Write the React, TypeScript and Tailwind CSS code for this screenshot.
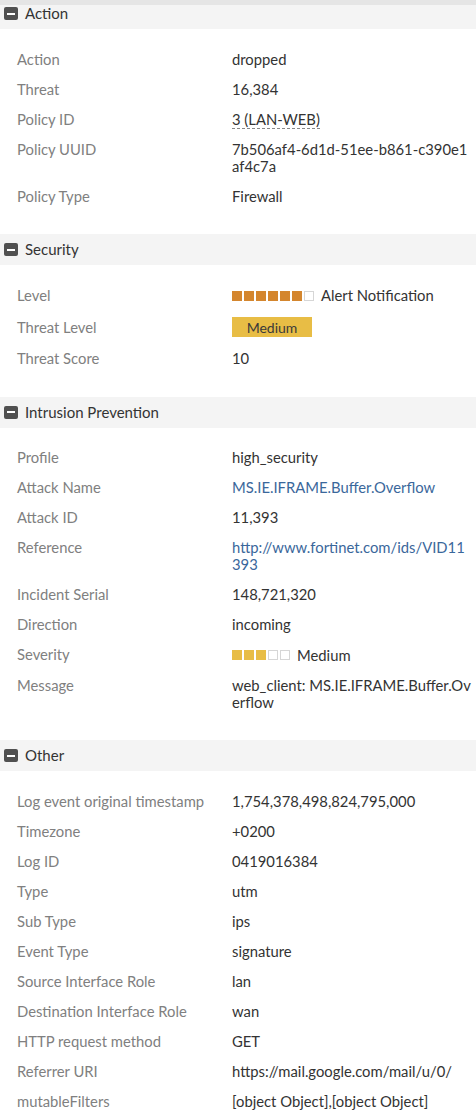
import type { ReactNode } from "react";

type Row = { label: string; value: ReactNode; tall?: boolean };

function Bars({ filled, total, color }: { filled: number; total: number; color: string }) {
  return (
    <span className="inline-flex items-center gap-[2px] mr-[7px]">
      {Array.from({ length: total }).map((_, i) => (
        <span
          key={i}
          className={i < filled ? "w-[10px] h-[10px]" : "w-[10px] h-[10px] border border-[#d6d6d6] bg-white"}
          style={i < filled ? { background: color } : undefined}
        />
      ))}
    </span>
  );
}

const Link = ({ children }: { children: ReactNode }) => (
  <span className="text-[#3a679b]">{children}</span>
);

const sections: { title: string; rows: Row[] }[] = [
  {
    title: "Action",
    rows: [
      { label: "Action", value: "dropped" },
      { label: "Threat", value: "16,384" },
      {
        label: "Policy ID",
        value: <span className="border-b border-dashed border-[#888]">3 (LAN-WEB)</span>,
      },
      { label: "Policy UUID", value: "7b506af4-6d1d-51ee-b861-c390e1af4c7a" },
      { label: "Policy Type", value: "Firewall" },
    ],
  },
  {
    title: "Security",
    rows: [
      {
        label: "Level",
        value: (
          <span className="inline-flex items-center">
            <Bars filled={6} total={7} color="#d4862e" />
            Alert Notification
          </span>
        ),
      },
      {
        label: "Threat Level",
        tall: true,
        value: (
          <span className="inline-flex items-center justify-center w-[80px] h-[20px] bg-[#e8bd45] text-[14px] text-[#3a3a3a]">
            Medium
          </span>
        ),
      },
      { label: "Threat Score", value: "10" },
    ],
  },
  {
    title: "Intrusion Prevention",
    rows: [
      { label: "Profile", value: "high_security" },
      { label: "Attack Name", value: <Link>MS.IE.IFRAME.Buffer.Overflow</Link> },
      { label: "Attack ID", value: "11,393" },
      { label: "Reference", value: <Link>http://www.fortinet.com/ids/VID11393</Link> },
      { label: "Incident Serial", value: "148,721,320" },
      { label: "Direction", value: "incoming" },
      {
        label: "Severity",
        value: (
          <span className="inline-flex items-center">
            <Bars filled={3} total={5} color="#e8bd45" />
            Medium
          </span>
        ),
      },
      { label: "Message", value: "web_client: MS.IE.IFRAME.Buffer.Overflow" },
    ],
  },
  {
    title: "Other",
    rows: [
      { label: "Log event original timestamp", value: "1,754,378,498,824,795,000" },
      { label: "Timezone", value: "+0200" },
      { label: "Log ID", value: "0419016384" },
      { label: "Type", value: "utm" },
      { label: "Sub Type", value: "ips" },
      { label: "Event Type", value: "signature" },
      { label: "Source Interface Role", value: "lan" },
      { label: "Destination Interface Role", value: "wan" },
      { label: "HTTP request method", value: "GET" },
      { label: "Referrer URI", value: "https://mail.google.com/mail/u/0/" },
      { label: "mutableFilters", value: "[object Object],[object Object]" },
    ],
  },
];

function CollapseIcon() {
  return (
    <span className="flex items-center justify-center w-[14px] h-[13px] rounded-[2px] bg-[#505050]">
      <span className="w-[8px] h-[2px] bg-white" />
    </span>
  );
}

export default function App() {
  return (
    <div
      className="w-[476px] h-[1115px] overflow-hidden bg-white text-[14.8px] text-[#333]"
      style={{ fontFamily: "Lato, 'Open Sans', sans-serif" }}
    >
      <div className="h-[5px] bg-[#e5e5e5]" />
      {sections.map((s, idx) => (
        <div key={s.title}>
          <div
            className={
              idx === 0
                ? "flex items-center gap-[7px] pl-[4px] h-[24px] pb-[7px] bg-[#f4f4f4]"
                : "flex items-center gap-[7px] pl-[4px] h-[31px] bg-[#f4f4f4]"
            }
          >
            <CollapseIcon />
            <span className="text-[15px] text-[#333]">{s.title}</span>
          </div>
          <div className="pt-[15px] pb-[23px] pl-[17px] pr-[4px]">
            {s.rows.map((r) => (
              <div key={r.label} className="grid grid-cols-[215px_1fr] py-[6.5px] leading-[17px]">
                <div className={r.tall ? "text-[#808080] leading-[20px]" : "text-[#808080]"}>{r.label}</div>
                <div className="break-all">{r.value}</div>
              </div>
            ))}
          </div>
        </div>
      ))}
    </div>
  );
}
